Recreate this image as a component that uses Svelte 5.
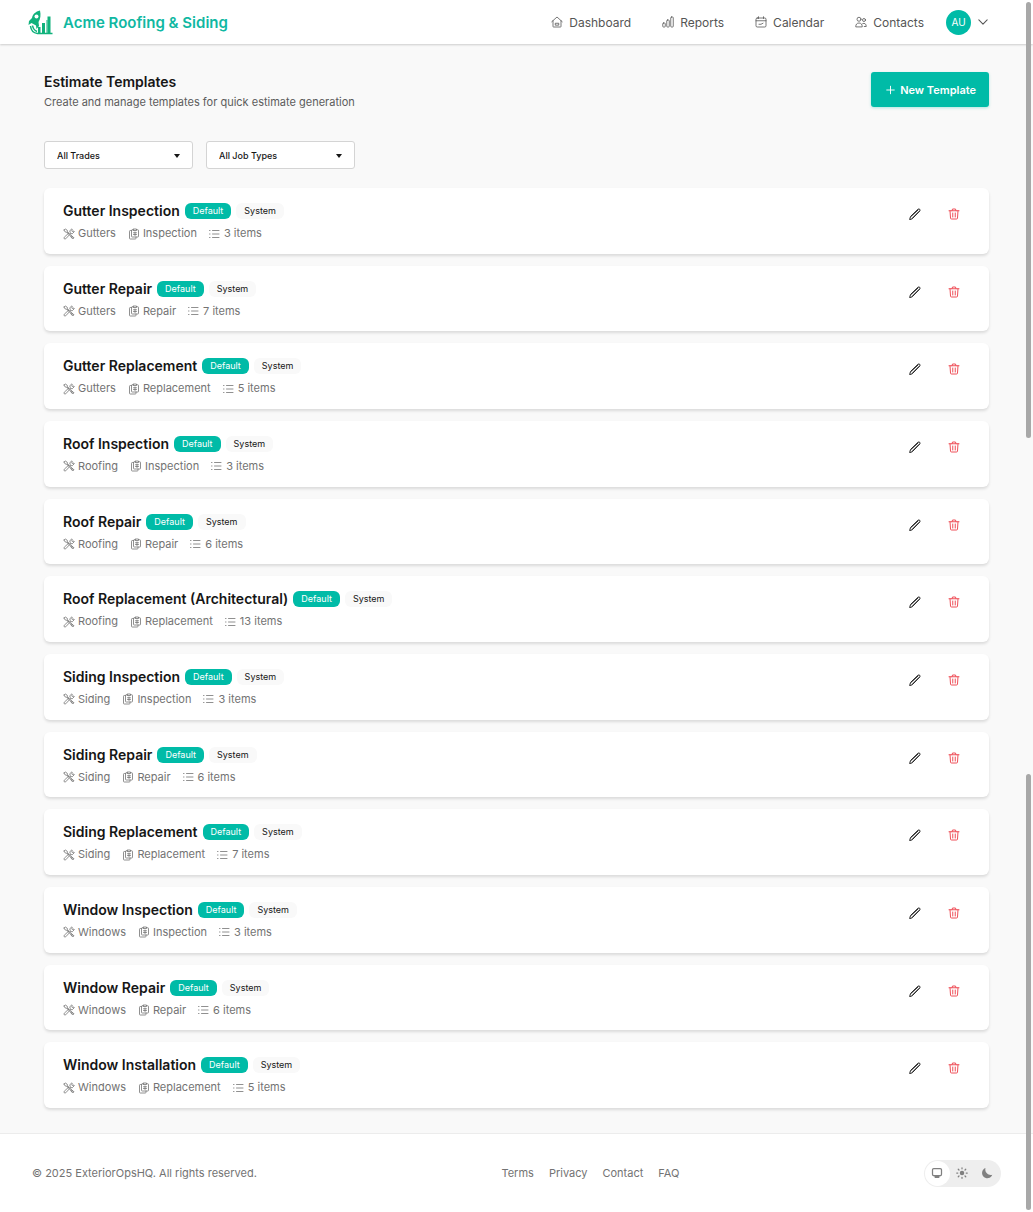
<script lang="ts">
	interface Template {
		name: string;
		trade: string;
		jobType: string;
		items: number;
	}

	const navItems = [
		{ label: 'Dashboard', icon: 'home' },
		{ label: 'Reports', icon: 'chart' },
		{ label: 'Calendar', icon: 'calendar' },
		{ label: 'Contacts', icon: 'users' }
	];

	const footerLinks = ['Terms', 'Privacy', 'Contact', 'FAQ'];

	const templates: Template[] = [
		{ name: 'Gutter Inspection', trade: 'Gutters', jobType: 'Inspection', items: 3 },
		{ name: 'Gutter Repair', trade: 'Gutters', jobType: 'Repair', items: 7 },
		{ name: 'Gutter Replacement', trade: 'Gutters', jobType: 'Replacement', items: 5 },
		{ name: 'Roof Inspection', trade: 'Roofing', jobType: 'Inspection', items: 3 },
		{ name: 'Roof Repair', trade: 'Roofing', jobType: 'Repair', items: 6 },
		{ name: 'Roof Replacement (Architectural)', trade: 'Roofing', jobType: 'Replacement', items: 13 },
		{ name: 'Siding Inspection', trade: 'Siding', jobType: 'Inspection', items: 3 },
		{ name: 'Siding Repair', trade: 'Siding', jobType: 'Repair', items: 6 },
		{ name: 'Siding Replacement', trade: 'Siding', jobType: 'Replacement', items: 7 },
		{ name: 'Window Inspection', trade: 'Windows', jobType: 'Inspection', items: 3 },
		{ name: 'Window Repair', trade: 'Windows', jobType: 'Repair', items: 6 },
		{ name: 'Window Installation', trade: 'Windows', jobType: 'Replacement', items: 5 }
	];

	let trade = $state('');
	let jobType = $state('');
	let theme = $state('system');

	const trades = [...new Set(templates.map((t) => t.trade))];
	const jobTypes = [...new Set(templates.map((t) => t.jobType))];

	const visible = $derived(
		templates.filter((t) => (!trade || t.trade === trade) && (!jobType || t.jobType === jobType))
	);
</script>

{#snippet icon(name: string)}
	<svg class="icon" viewBox="0 0 24 24" aria-hidden="true">
		{#if name === 'home'}
			<path d="M1.5 11.5 12 2l10.500 9.500M4 9.500V21a1 1 0 0 0 1 1h14a1 1 0 0 0 1-1V9.500M8.500 17.500v-3h7v3z" />
		{:else if name === 'chart'}
			<rect x="1.500" y="14" width="5" height="8" rx="1.500" />
			<rect x="9.500" y="8" width="5" height="14" rx="1.500" />
			<rect x="17.500" y="2" width="5" height="20" rx="1.500" />
		{:else if name === 'calendar'}
			<rect x="2" y="4" width="20" height="18" rx="2.500" />
			<path d="M7 1.500V5M17 1.500V5M2 9.500h20M8 16.500h4l4-2" />
		{:else if name === 'users'}
			<circle cx="8" cy="6.500" r="4" />
			<circle cx="18" cy="8" r="3" />
			<path d="M1.500 21c0-4.500 2.500-7 6.500-7s6.500 2.500 6.500 7zM15.500 15c4-1.500 7 1 7 6h-4" />
		{:else if name === 'tools'}
			<path d="m2 4 2.500-2 4 2.500.5 3L19.500 18M2 4l2.500 4 3 .5L18 19M17 16l5 3.500-2.500 2.500-4-4.500M14.500 9l-1-3.500L17.500 2l1 .500-1 3.500 1 1 3.500-1 .500 1.500-4 4-3.500-.500M10 11.500l-7.500 7a2 2 0 0 0 3 3l7-7.500M9 9l3 3" />
		{:else if name === 'clipboard'}
			<path d="M7 5H4.500A1.500 1.500 0 0 0 3 6.500v14A1.500 1.500 0 0 0 4.500 22h10a1.500 1.500 0 0 0 1.500-1.500V18" />
			<path d="M11 3.500H8.500A1.500 1.500 0 0 0 7 5v11.500A1.500 1.500 0 0 0 8.500 18h11a1.500 1.500 0 0 0 1.500-1.500V5a1.500 1.500 0 0 0-1.500-1.500H17" />
			<path d="M11 2h6v3h-6zM14 8v7M11 9.500h6M11 13h6" />
		{:else if name === 'list'}
			<path d="M7 5h13M7 12h13M7 19h13M1 5h1M1 12h1M1 19h1" />
		{:else if name === 'pencil'}
			<path d="m1.500 22.500 1.500-5.500L18 2.500c2.500-2 5.500 1 3.500 3.500L7 21zM4 17l14-13M7 20 20 7" />
		{:else if name === 'trash'}
			<path d="M2 5.500h20M8 5.500l1-3.500h6l1 3.500M4 5.500 5 20a2 2 0 0 0 2 2h10a2 2 0 0 0 2-2l1-14.500M9.500 10v8M14.500 10v8" />
		{:else if name === 'plus'}
			<path d="M12 2v20M2 12h20" />
		{:else if name === 'chevron'}
			<path d="m2 7 10 10L22 7" />
		{/if}
	</svg>
{/snippet}

<div class="page">
	<header class="topbar">
		<a class="brand" href="/">
			<svg class="logo" viewBox="0 0 50 50" aria-hidden="true">
				<g fill="#10b27c">
					<path d="M24 1C15 3 9 9 8 16l-6 6-1 8 6-4 9 5 1 7 5-6-1-8c4-6 5-14 3-23z" />
					<rect x="20" y="34" width="5" height="12" />
					<rect x="28" y="26" width="6" height="20" />
					<rect x="37" y="20" width="2" height="26" />
					<rect x="39" y="13" width="6" height="33" />
				</g>
				<circle cx="17" cy="13" r="4" fill="#fff" />
				<path d="M5 32c1 9 6 14 14 15h30" fill="none" stroke="#10b27c" stroke-width="3" />
				<path d="M9 31c1 6 4 10 9 12" fill="none" stroke="#10b27c" stroke-width="3" />
			</svg>
			<span>Acme Roofing &amp; Siding</span>
		</a>
		<nav class="nav" aria-label="Main">
			{#each navItems as item}
				<a href="/{item.label.toLowerCase()}">{@render icon(item.icon)}{item.label}</a>
			{/each}
			<button class="account" aria-label="Account menu">
				<span class="avatar">AU</span>
				{@render icon('chevron')}
			</button>
		</nav>
	</header>

	<main class="content">
		<div class="heading">
			<div>
				<h1>Estimate Templates</h1>
				<p>Create and manage templates for quick estimate generation</p>
			</div>
			<button class="new-template">{@render icon('plus')}New Template</button>
		</div>

		<div class="filters">
			<div class="select">
				<select aria-label="Trade" bind:value={trade}>
					<option value="">All Trades</option>
					{#each trades as t}<option>{t}</option>{/each}
				</select>
			</div>
			<div class="select">
				<select aria-label="Job type" bind:value={jobType}>
					<option value="">All Job Types</option>
					{#each jobTypes as j}<option>{j}</option>{/each}
				</select>
			</div>
		</div>

		<ul class="templates">
			{#each visible as template (template.name)}
				<li class="card">
					<div class="info">
						<div class="title-row">
							<h2>{template.name}</h2>
							<span class="badge primary">Default</span>
							<span class="badge">System</span>
						</div>
						<div class="meta">
							<span>{@render icon('tools')}{template.trade}</span>
							<span>{@render icon('clipboard')}{template.jobType}</span>
							<span>{@render icon('list')}{template.items} items</span>
						</div>
					</div>
					<div class="actions">
						<button aria-label="Edit {template.name}">{@render icon('pencil')}</button>
						<button class="danger" aria-label="Delete {template.name}">{@render icon('trash')}</button>
					</div>
				</li>
			{/each}
		</ul>
	</main>

	<footer class="footer">
		<p>© 2025 ExteriorOpsHQ. All rights reserved.</p>
		<nav aria-label="Footer">
			{#each footerLinks as link}
				<a href="/{link.toLowerCase()}">{link}</a>
			{/each}
		</nav>
		<div class="themes">
			<button class:active={theme === 'system'} aria-label="System theme" onclick={() => (theme = 'system')}>
				<svg viewBox="0 0 24 24" aria-hidden="true">
					<rect x="3" y="3" width="18" height="14" rx="2.500" fill="none" stroke="currentColor" stroke-width="2.500" />
					<path d="M3 16h18l-3 3h-2l1 3H7l1-3H6z" fill="currentColor" />
				</svg>
			</button>
			<button class:active={theme === 'light'} aria-label="Light theme" onclick={() => (theme = 'light')}>
				<svg viewBox="0 0 24 24" aria-hidden="true">
					<circle cx="12" cy="12" r="4.500" fill="currentColor" />
					<path
						d="M12 1.500v2M12 20.500v2M1.500 12h2M20.500 12h2M4.500 4.500l1.500 1.500M18 18l1.500 1.500M4.500 19.500l1.500-1.500M18 6l1.500-1.500"
						stroke="currentColor"
						stroke-width="2.500"
						stroke-linecap="round"
					/>
				</svg>
			</button>
			<button class:active={theme === 'dark'} aria-label="Dark theme" onclick={() => (theme = 'dark')}>
				<svg viewBox="0 0 24 24" aria-hidden="true">
					<path d="M9 2a10.500 10.500 0 1 0 13.500 13.500C15 18 6.500 11 9 2z" fill="currentColor" />
				</svg>
			</button>
		</div>
	</footer>
</div>

<div class="scroll-thumb upper" aria-hidden="true"></div>
<div class="scroll-thumb lower" aria-hidden="true"></div>

<style>
	:global(body) {
		background: #f9f9f9;
		color: #161616;
		font-family: Inter, 'Liberation Sans', sans-serif;
	}

	.page {
		display: flex;
		flex-direction: column;
		min-height: 100vh;
	}

	h1,
	h2,
	p,
	ul {
		margin: 0;
		padding: 0;
	}

	a {
		color: inherit;
		text-decoration: none;
	}

	button {
		display: inline-flex;
		align-items: center;
		justify-content: center;
		padding: 0;
		border: 0;
		background: none;
		color: inherit;
		font: inherit;
		cursor: pointer;
	}

	.icon {
		width: 12px;
		height: 12px;
		flex-shrink: 0;
		fill: none;
		stroke: currentColor;
		stroke-width: 1.6;
		stroke-linecap: round;
		stroke-linejoin: round;
	}

	.topbar {
		display: flex;
		align-items: center;
		justify-content: space-between;
		height: 44px;
		padding: 0 45px 0 28px;
		background: #fff;
		box-shadow: 0 1px 2px rgb(0 0 0 / 18%);
	}

	.brand {
		display: flex;
		align-items: center;
		gap: 10px;
		color: #10b8a2;
		font-size: 15px;
		font-weight: 600;
	}

	.logo {
		width: 25px;
		height: 25px;
	}

	.nav {
		display: flex;
		align-items: center;
		gap: 31px;
		color: #555;
		font-size: 12px;
	}

	.nav a {
		display: flex;
		align-items: center;
		gap: 6px;
	}

	.account {
		gap: 7px;
		margin-left: -9px;
	}

	.account .icon {
		width: 10px;
		stroke-width: 2.5;
	}

	.avatar {
		display: grid;
		place-items: center;
		width: 25px;
		height: 25px;
		border-radius: 50%;
		background: #00bba7;
		color: #fff;
		font-size: 10px;
	}

	.content {
		display: flex;
		flex: 1;
		flex-direction: column;
		padding: 28px 44px 25px;
	}

	.heading {
		display: flex;
		align-items: flex-start;
		justify-content: space-between;
		margin-bottom: 29px;
	}

	h1 {
		font-size: 14px;
		font-weight: 600;
		line-height: 20px;
	}

	.heading p {
		color: #5c5c5c;
		font-size: 11px;
		line-height: 20px;
	}

	.new-template {
		gap: 5px;
		height: 35px;
		padding: 0 13px 0 15px;
		border-radius: 3px;
		background: #00bba7;
		box-shadow: 0 1px 3px rgb(0 187 167 / 30%);
		color: #fff;
		font-size: 11px;
		font-weight: 600;
	}

	.new-template .icon {
		width: 9px;
		stroke-width: 2.5;
	}

	.filters {
		display: flex;
		gap: 13px;
		margin-bottom: 19px;
	}

	.select {
		position: relative;
		width: 149px;
	}

	.select::after {
		position: absolute;
		top: 13px;
		right: 13px;
		border: 3px solid transparent;
		border-top: 4px solid #161616;
		content: '';
		pointer-events: none;
	}

	select {
		display: block;
		width: 100%;
		height: 28px;
		padding: 0 24px 0 12px;
		border: 1px solid #d4d4d4;
		border-radius: 3px;
		appearance: none;
		background: #fff;
		color: #161616;
		font: 500 9px Inter, sans-serif;
	}

	/* rows share whatever height the page leaves them */
	.templates {
		display: grid;
		flex: 1;
		grid-auto-rows: 1fr;
		gap: 12px;
		list-style: none;
	}

	.card {
		display: flex;
		justify-content: space-between;
		padding: 13px 22px 10px 19px;
		border-radius: 6px;
		background: #fff;
		box-shadow: 0 2px 3px rgb(0 0 0 / 12%);
	}

	.title-row {
		display: flex;
		align-items: center;
		gap: 5px;
	}

	h2 {
		font-size: 14px;
		font-weight: 600;
		line-height: 20px;
	}

	.badge {
		padding: 0 8px;
		border-radius: 6px;
		background: #f9f9f9;
		font-size: 9px;
		line-height: 16px;
	}

	.badge.primary {
		background: #00bba7;
		color: #fff;
	}

	.meta {
		display: flex;
		gap: 12px;
		margin-top: 4px;
		color: #737373;
		font-size: 11px;
		line-height: 17px;
	}

	.meta span {
		display: flex;
		align-items: center;
		gap: 3px;
	}

	.actions {
		display: flex;
		gap: 13px;
	}

	.actions button {
		width: 26px;
		height: 26px;
		color: #262626;
	}

	.actions .icon {
		stroke-width: 2;
	}

	.actions .danger {
		color: #ef4f58;
	}

	.footer {
		display: flex;
		align-items: center;
		justify-content: space-between;
		height: 78px;
		padding: 0 32px;
		border-top: 1px solid #ececec;
		background: #fff;
		color: #737373;
		font-size: 11px;
	}

	.footer nav {
		display: flex;
		gap: 15px;
	}

	.themes {
		display: flex;
		padding: 1px;
		border-radius: 14px;
		background: #eee;
	}

	.themes button {
		width: 25px;
		height: 25px;
		border-radius: 50%;
		color: #808080;
	}

	.themes .active {
		background: #fff;
	}

	.themes svg {
		width: 12px;
		height: 12px;
	}

	.scroll-thumb {
		position: fixed;
		right: 2px;
		width: 5px;
		height: 36%;
		border-radius: 3px;
		background: #a8a8a8;
	}

	.upper {
		top: 2px;
	}

	.lower {
		bottom: 2px;
	}
</style>
